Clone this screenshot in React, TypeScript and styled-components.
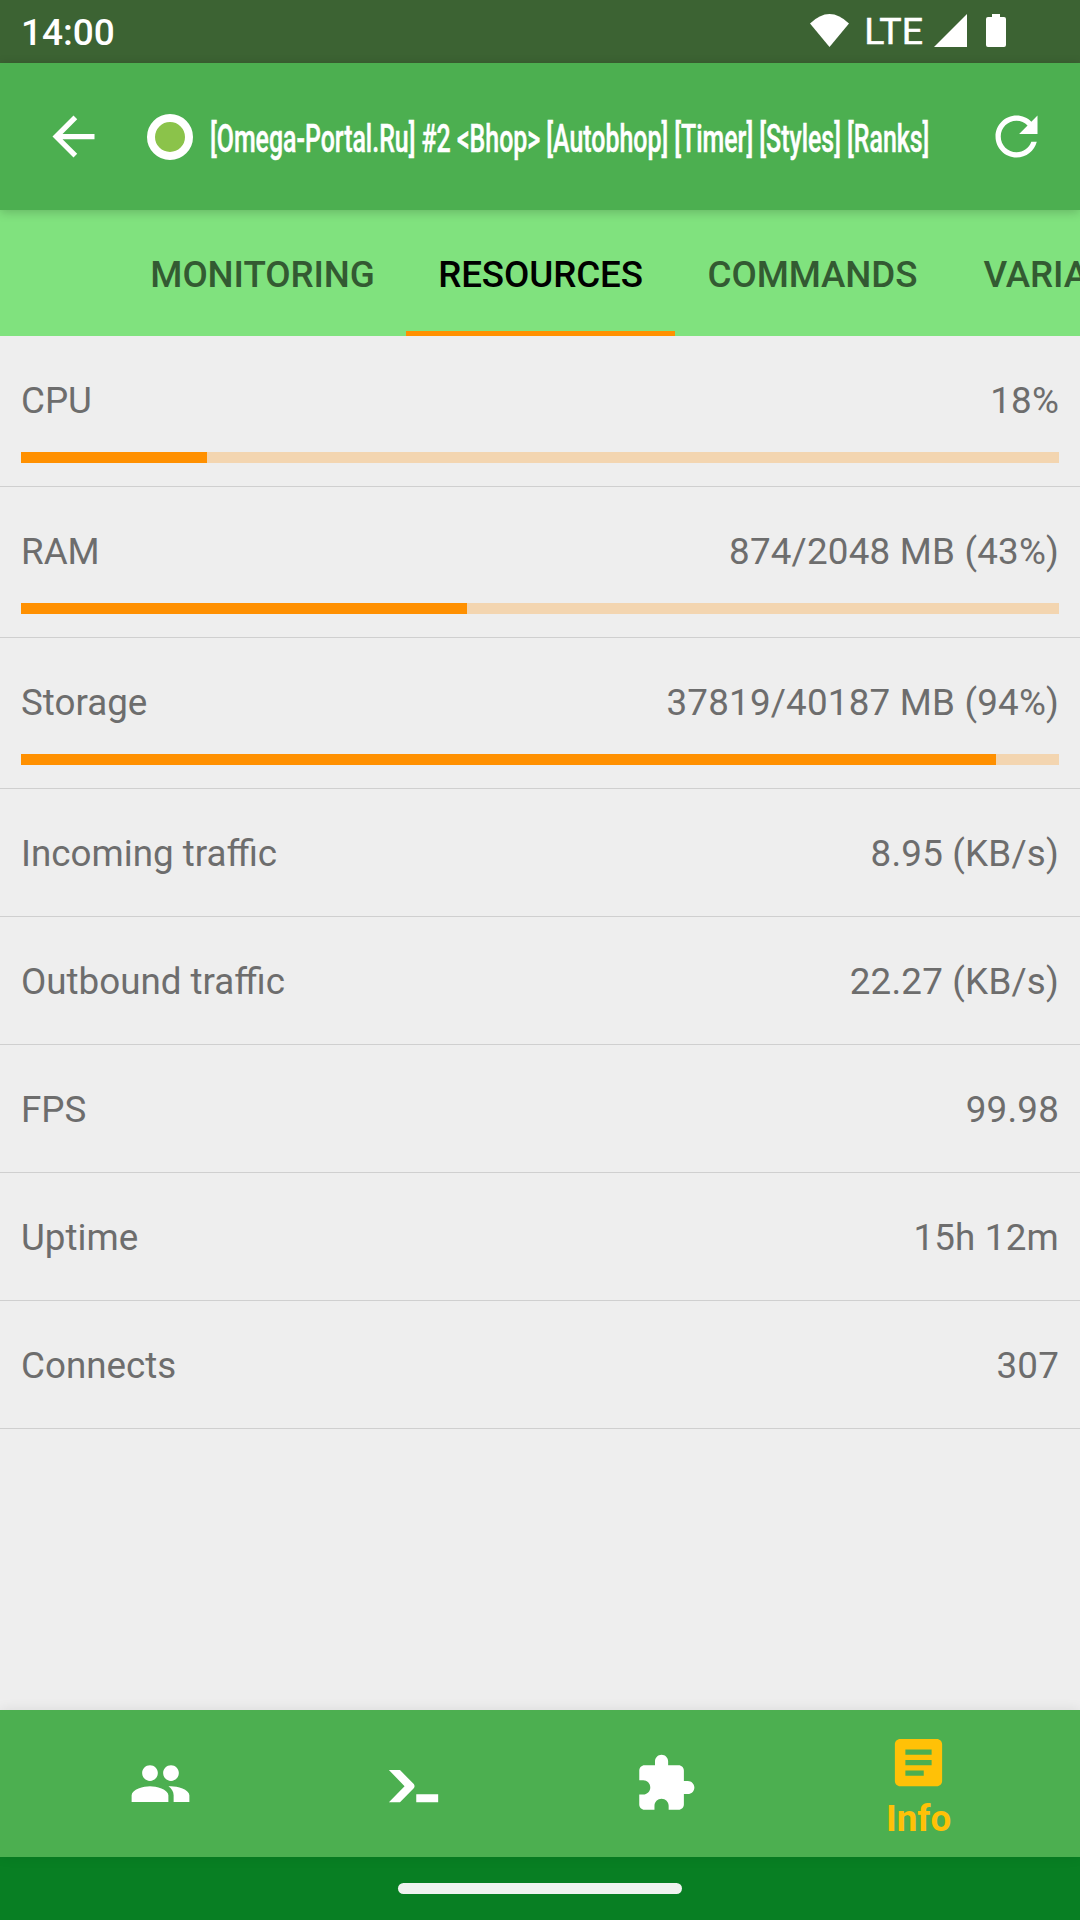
import React from "react";
import styled, { createGlobalStyle } from "styled-components";

const GlobalStyle = createGlobalStyle`
  *, *::before, *::after { box-sizing: border-box; }
  html, body { margin: 0; padding: 0; background: #eeeeee; }
  body { font-family: Roboto, "Noto Sans", sans-serif; }
  button { margin: 0; padding: 0; border: 0; background: none; color: inherit; font: inherit; }
`;

const Screen = styled.div`
  display: flex;
  flex-direction: column;
  width: 1080px;
  height: 1920px;
  overflow: hidden;
  background: #eeeeee;
`;

const StatusBar = styled.div`
  display: flex;
  align-items: center;
  flex: none;
  height: 63px;
  padding: 0 74px 0 21px;
  background: #3c6333;
  color: #ffffff;
`;

const Clock = styled.span`
  margin-right: auto;
  padding-top: 3px;
  font-size: 37px;
  line-height: 44px;
  font-weight: 500;
`;

const NetworkType = styled.span`
  margin: 0 11px 0 15px;
  padding-bottom: 1px;
  font-size: 37.5px;
  line-height: 44px;
  font-weight: 400;
  -webkit-text-stroke: 0.5px currentColor;
`;

const StatusIcon = styled.svg<{ $w: number; $gap?: number }>`
  display: block;
  flex: none;
  width: ${(p) => p.$w}px;
  height: 33px;
  margin: 0 0 2px ${(p) => p.$gap ?? 0}px;
  fill: currentColor;
`;

const AppBar = styled.header`
  display: flex;
  align-items: center;
  flex: none;
  height: 147px;
  padding: 0 32px 0 42px;
  background: #4caf50;
  color: #ffffff;
  z-index: 1;
  box-shadow: 0 2px 10px rgba(0, 0, 0, 0.2);
`;

const IconButton = styled.button`
  flex: none;
  width: 63px;
  height: 63px;
`;

const Glyph = styled.svg`
  display: block;
  width: 63px;
  height: 63px;
  fill: currentColor;
`;

const OnlineDot = styled.span`
  flex: none;
  width: 46px;
  height: 46px;
  margin-left: 42px;
  border: 8px solid #ffffff;
  border-radius: 50%;
  background: #8bc34a;
`;

const TitleBox = styled.div`
  flex: 1;
  min-width: 0;
  margin-left: 17px;
  padding-top: 5px;
`;

const Title = styled.h1`
  display: inline-block;
  margin: 0;
  font-size: 38px;
  line-height: 46px;
  font-weight: 500;
  white-space: nowrap;
  -webkit-text-stroke: 0.5px currentColor;
  transform: scaleX(0.655);
  transform-origin: 0 50%;
`;

const TabStrip = styled.nav`
  display: flex;
  flex: none;
  height: 126px;
  padding-left: 119px;
  overflow: hidden;
  background: #80e27e;
`;

const Tab = styled.button<{ $w: number; $active?: boolean }>`
  flex: none;
  width: ${(p) => p.$w}px;
  padding-top: 7px;
  border-bottom: 5px solid ${(p) => (p.$active ? "#ff9000" : "transparent")};
  color: ${(p) => (p.$active ? "#000000" : "#335a32")};
  font-size: 36.75px;
  font-weight: 500;
  letter-spacing: -0.1px;
  text-align: center;
  white-space: nowrap;
`;

const StatList = styled.main`
  flex: 1;
  min-height: 0;
`;

const StatRow = styled.section`
  padding: 43px 21px;
  border-bottom: 1px solid #cfcfcf;
  color: #6d6d6d;

  &[data-meter="true"] {
    padding-bottom: 23px;
  }
`;

const StatLine = styled.div`
  display: flex;
  justify-content: space-between;
  height: 41px;
  font-size: 36.75px;
  line-height: 43px;
  white-space: nowrap;
`;

const StatValue = styled.span`
  letter-spacing: 0.2px;
`;

const METER_WIDTH = 1038;

const Meter = styled.div`
  width: ${METER_WIDTH}px;
  height: 11px;
  margin-top: 32px;
  background: #f3d5b0;
`;

const MeterFill = styled.div`
  height: 100%;
  background: #ff9000;
`;

const BottomNav = styled.nav`
  display: flex;
  flex: none;
  height: 147px;
  padding: 0 35px 0 34px;
  background: #4caf50;
  z-index: 1;
  box-shadow: 0 0 12px rgba(0, 0, 0, 0.09);
`;

const NavItem = styled.button<{ $active?: boolean }>`
  display: flex;
  flex: 1;
  flex-direction: column;
  align-items: center;
  justify-content: center;
  color: ${(p) => (p.$active ? "#ffc107" : "#ffffff")};
`;

const NavLabel = styled.span`
  height: 42px;
  font-size: 36.75px;
  line-height: 50px;
  font-weight: 700;
`;

const GestureBar = styled.footer`
  display: flex;
  align-items: center;
  justify-content: center;
  flex: none;
  height: 63px;
  background: #087f23;
`;

const GesturePill = styled.span`
  width: 284px;
  height: 11px;
  border-radius: 5.5px;
  background: #eff3f0;
`;

const tabs = [
  { label: "MONITORING", width: 287 },
  { label: "RESOURCES", width: 269, active: true },
  { label: "COMMANDS", width: 275 },
  { label: "VARIABLES", width: 257 },
];

const stats = [
  { label: "CPU", value: "18%", percent: 18 },
  { label: "RAM", value: "874/2048 MB (43%)", percent: 43 },
  { label: "Storage", value: "37819/40187 MB (94%)", percent: 94 },
  { label: "Incoming traffic", value: "8.95 (KB/s)" },
  { label: "Outbound traffic", value: "22.27 (KB/s)" },
  { label: "FPS", value: "99.98" },
  { label: "Uptime", value: "15h 12m" },
  { label: "Connects", value: "307" },
];

const navItems = [
  {
    id: "players",
    path: "M16 11c1.66 0 2.99-1.34 2.99-3S17.66 5 16 5c-1.66 0-3 1.34-3 3s1.34 3 3 3zm-8 0c1.66 0 2.99-1.34 2.99-3S9.66 5 8 5C6.34 5 5 6.34 5 8s1.34 3 3 3zm0 2c-2.33 0-7 1.17-7 3.5V19h14v-2.5c0-2.33-4.67-3.5-7-3.5zm8 0c-.29 0-.62.02-.97.05 1.16.84 1.97 1.97 1.97 3.45V19h6v-2.5c0-2.33-4.67-3.5-7-3.5z",
  },
  {
    id: "console",
    path: "M2.63 6.9H6.85L12.1 12.2Q12.7 13 12.1 13.8L6.85 19.1H2.63L8.6 13zM13.05 16.05H21.4V19.1H13.05z",
  },
  {
    id: "plugins",
    path: "M20.5 11H19V7c0-1.1-.9-2-2-2h-4V3.5C13 2.12 11.88 1 10.5 1S8 2.12 8 3.5V5H4c-1.1 0-1.99.9-1.99 2v3.8H3.5c1.49 0 2.7 1.21 2.7 2.7s-1.21 2.7-2.7 2.7H2V20c0 1.1.9 2 2 2h3.8v-1.5c0-1.49 1.21-2.7 2.7-2.7 1.49 0 2.7 1.21 2.7 2.7V22H17c1.1 0 2-.9 2-2v-4h1.5c1.38 0 2.5-1.12 2.5-2.5S21.88 11 20.5 11z",
  },
  {
    id: "info",
    label: "Info",
    path: "M19 3H5c-1.1 0-2 .9-2 2v14c0 1.1.9 2 2 2h14c1.1 0 2-.9 2-2V5c0-1.1-.9-2-2-2zm-5 14H7v-2h7v2zm3-4H7v-2h10v2zm0-4H7V7h10v2z",
  },
];

export default function App() {
  return (
    <>
      <GlobalStyle />
      <Screen>
        <StatusBar>
          <Clock>14:00</Clock>
          <StatusIcon $w={39} viewBox="0 0 39 33">
            <path d="M0 9.5Q19.5-9.5 39 9.5L19.5 33z" />
          </StatusIcon>
          <NetworkType>LTE</NetworkType>
          <StatusIcon $w={33} viewBox="0 0 33 33">
            <path d="M33 0V33H0z" />
          </StatusIcon>
          <StatusIcon $w={20} $gap={19} viewBox="0 0 20 33">
            <path d="M6 0H14V3H18Q20 3 20 5V31Q20 33 18 33H2Q0 33 0 31V5Q0 3 2 3H6z" />
          </StatusIcon>
        </StatusBar>

        <AppBar>
          <IconButton aria-label="Back">
            <Glyph viewBox="0 0 24 24">
              <path d="M20 11H7.83l5.59-5.59L12 4l-8 8 8 8 1.41-1.41L7.83 13H20v-2z" />
            </Glyph>
          </IconButton>
          <OnlineDot />
          <TitleBox>
            <Title>[Omega-Portal.Ru] #2 &lt;Bhop&gt; [Autobhop] [Timer] [Styles] [Ranks]</Title>
          </TitleBox>
          <IconButton aria-label="Refresh">
            <Glyph viewBox="0 0 24 24">
              <path d="M17.65 6.35C16.2 4.9 14.21 4 12 4c-4.42 0-7.99 3.58-7.99 8s3.57 8 7.99 8c3.73 0 6.84-2.55 7.73-6h-2.08c-.82 2.33-3.04 4-5.65 4-3.31 0-6-2.69-6-6s2.69-6 6-6c1.66 0 3.14.69 4.22 1.78L13 11h7V4l-2.35 2.35z" />
            </Glyph>
          </IconButton>
        </AppBar>

        <TabStrip>
          {tabs.map((tab) => (
            <Tab key={tab.label} $w={tab.width} $active={tab.active}>
              {tab.label}
            </Tab>
          ))}
        </TabStrip>

        <StatList>
          {stats.map((stat) => (
            <StatRow key={stat.label} data-meter={stat.percent !== undefined}>
              <StatLine>
                <span>{stat.label}</span>
                <StatValue>{stat.value}</StatValue>
              </StatLine>
              {stat.percent !== undefined && (
                <Meter>
                  <MeterFill style={{ width: Math.floor((METER_WIDTH * stat.percent) / 100) }} />
                </Meter>
              )}
            </StatRow>
          ))}
        </StatList>

        <BottomNav>
          {navItems.map((item) => (
            <NavItem key={item.id} aria-label={item.id} $active={item.label !== undefined}>
              <Glyph viewBox="0 0 24 24">
                <path d={item.path} />
              </Glyph>
              {item.label && <NavLabel>{item.label}</NavLabel>}
            </NavItem>
          ))}
        </BottomNav>

        <GestureBar>
          <GesturePill />
        </GestureBar>
      </Screen>
    </>
  );
}
